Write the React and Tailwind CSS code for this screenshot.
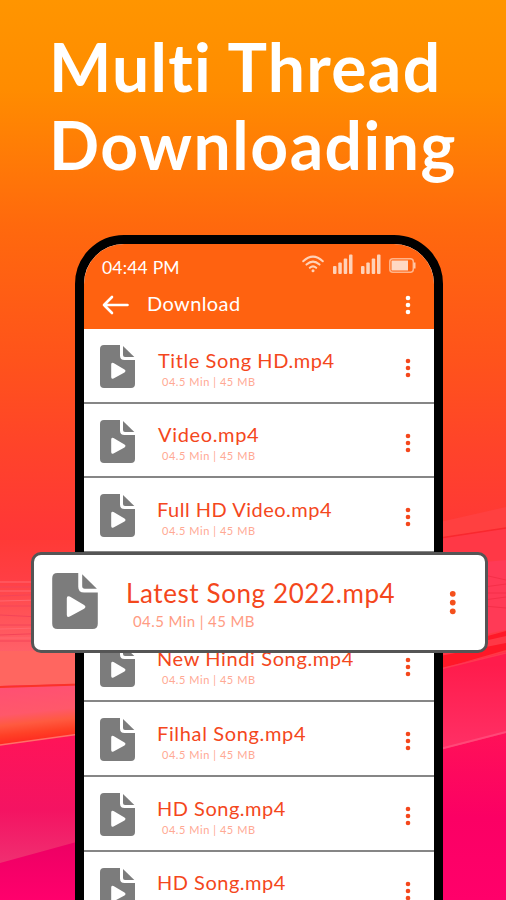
function Backdrop() {
  return (
    <svg className="absolute inset-0" width="506" height="900" viewBox="0 0 506 900" fill="none" preserveAspectRatio="none">
      <defs>
        <linearGradient id="sky" x1="0" y1="0" x2="0" y2="900" gradientUnits="userSpaceOnUse">
          <stop offset="0" stopColor="#ff9500" />
          <stop offset="0.1" stopColor="#ff8c00" />
          <stop offset="0.25" stopColor="#ff690d" />
          <stop offset="0.4" stopColor="#ff531b" />
          <stop offset="0.5" stopColor="#ff432a" />
          <stop offset="0.6" stopColor="#ff3638" />
          <stop offset="0.73" stopColor="#ff1452" />
          <stop offset="0.88" stopColor="#fa0064" />
          <stop offset="1" stopColor="#ff006a" />
        </linearGradient>
        <linearGradient id="haze" x1="0" y1="540" x2="0" y2="651" gradientUnits="userSpaceOnUse">
          <stop offset="0" stopColor="#ff3a36" />
          <stop offset="0.35" stopColor="#ff3e44" />
          <stop offset="0.6" stopColor="#ff5054" />
          <stop offset="1" stopColor="#ff6068" />
        </linearGradient>
        <linearGradient id="wave" x1="0" y1="686" x2="6" y2="744" gradientUnits="userSpaceOnUse">
          <stop offset="0" stopColor="#ff4f74" />
          <stop offset="0.5" stopColor="#ff586a" />
          <stop offset="0.68" stopColor="#ff5a40" />
          <stop offset="0.85" stopColor="#ff4026" />
          <stop offset="1" stopColor="#ff2a20" />
        </linearGradient>
        <linearGradient id="deep" x1="0" y1="735" x2="0" y2="860" gradientUnits="userSpaceOnUse">
          <stop offset="0" stopColor="#ff1458" />
          <stop offset="0.6" stopColor="#f41362" />
          <stop offset="1" stopColor="#f02d70" />
        </linearGradient>
        <linearGradient id="low" x1="0" y1="845" x2="0" y2="900" gradientUnits="userSpaceOnUse">
          <stop offset="0" stopColor="#ee0064" />
          <stop offset="1" stopColor="#ff006c" />
        </linearGradient>
        <linearGradient id="rose" x1="0" y1="665" x2="0" y2="750" gradientUnits="userSpaceOnUse">
          <stop offset="0" stopColor="#ff1c4c" />
          <stop offset="1" stopColor="#ff3066" />
        </linearGradient>
        <linearGradient id="magenta" x1="0" y1="735" x2="0" y2="900" gradientUnits="userSpaceOnUse">
          <stop offset="0" stopColor="#ff1058" />
          <stop offset="0.5" stopColor="#fb0064" />
          <stop offset="1" stopColor="#ff006a" />
        </linearGradient>
      </defs>
      <rect width="506" height="900" fill="url(#sky)" />
      <path d="M0 540H80V652H0Z" fill="url(#haze)" />
      <path d="M0 587H80M0 596L80 593M0 606H80M0 615L80 619M0 625H80M0 635L80 632M0 641H80" stroke="#f44458" strokeWidth="1" />
      <path d="M0 582H80M0 591H80M0 601L80 599M0 629L80 627M0 638H80" stroke="#ff6870" strokeWidth="1" />
      <path d="M0 651H80V684L0 686Z" fill="#ff6660" />
      <path d="M0 686L80 684V734L0 746Z" fill="url(#wave)" />
      <path d="M0 687L80 684.5" stroke="#fb3228" strokeWidth="2" />
      <path d="M0 745L80 734V842L0 864Z" fill="url(#deep)" />
      <path d="M0 745L80 734" stroke="#ff7068" strokeWidth="1.5" />
      <path d="M0 863L80 841V900H0Z" fill="url(#low)" />
      <path d="M440 522L506 507V528L440 538Z" fill="#ff4040" />
      <path d="M440 538L506 528V655L440 666Z" fill="#ff3846" />
      <path d="M440 538L506 528" stroke="#f9282e" strokeWidth="1.500" />
      <path d="M440 566L506 560V630L440 644Z" fill="#ff3a56" />
      <path d="M484 575L506 580M484 587L506 584M484 593H506M484 600L506 597M484 606L506 608" stroke="#f52f48" strokeWidth="1" />
      <path d="M484 637L506 631V636L484 641Z" fill="#ff1828" />
      <path d="M440 656L506 643V650L440 669Z" fill="#ff1828" />
      <path d="M440 669L506 652V734L440 750Z" fill="url(#rose)" />
      <path d="M440 669L506 653" stroke="#ff3850" strokeWidth="1.5" />
      <path d="M440 750L506 733V900H440Z" fill="url(#magenta)" />
      <path d="M440 749L506 732" stroke="#ff4878" strokeWidth="2" />
    </svg>
  );
}

function FileIcon({ className }) {
  return (
    <svg className={className} viewBox="0 0 35 43" fill="none">
      <path
        fillRule="evenodd"
        d="M4 0H20V10.5Q20 15 24.5 15H35V39Q35 43 31 43H4Q0 43 0 39V4Q0 0 4 0ZM11.200 19.500V32Q11.200 34.600 13.500 33.400L24.500 27.400Q26.500 26 24.500 24.600L13.500 18.100Q11.200 17 11.200 19.500Z"
        fill="#7c7c7c"
      />
      <path d="M23 1L34.300 12H25Q23 12 23 10Z" fill="#7c7c7c" />
    </svg>
  );
}

function Dots({ className, fill }) {
  return (
    <svg className={className} viewBox="0 0 6 20" fill={fill}>
      <circle cx="3" cy="3" r="2.300" />
      <circle cx="3" cy="10" r="2.300" />
      <circle cx="3" cy="17" r="2.300" />
    </svg>
  );
}

function Signal() {
  return (
    <svg className="w-5 h-5" viewBox="0 0 20 20" fill="#ffd2b8">
      <rect x="0" y="12" width="3.500" height="8" rx="1" />
      <rect x="5.300" y="8.500" width="3.500" height="11.500" rx="1" />
      <rect x="10.700" y="4.500" width="3.500" height="15.500" rx="1" />
      <rect x="16" y="0.500" width="3.500" height="19.500" rx="1" />
    </svg>
  );
}

function StatusIcons() {
  return (
    <div className="flex items-start">
      <svg className="w-[22px] h-[18px] mt-px" viewBox="0 0 22 18" fill="none" stroke="#ffd2b8" strokeWidth="2" strokeLinecap="round">
        <path d="M1.200 6.200Q11 -3 20.800 6.200M4.500 9.600Q11 3.600 17.500 9.600M7.800 12.800Q11 9.900 14.200 12.800" />
        <circle cx="11" cy="15.700" r="1.500" fill="#ffd2b8" stroke="none" />
      </svg>
      <div className="ml-[9px]"><Signal /></div>
      <div className="ml-2"><Signal /></div>
      <svg className="w-[27px] h-4 ml-2 mt-[4px]" viewBox="0 0 27 16" fill="none">
        <rect x="0.800" y="0.800" width="23.500" height="13.400" rx="3" stroke="#ffb48a" strokeWidth="1.500" />
        <rect x="2.500" y="2.500" width="16.500" height="10" fill="#ffd8c4" />
        <path d="M25.500 4.500V10.500" stroke="#ffc8a8" strokeWidth="2" />
      </svg>
    </div>
  );
}

const songs = [
  { title: "Title Song HD.mp4", spacing: "tracking-[0.580px]", meta: true },
  { title: "Video.mp4", spacing: "tracking-[0.650px]", meta: true },
  { title: "Full HD Video.mp4", spacing: "-ml-px tracking-[0.500px]", meta: true },
  { title: "", spacing: "" },
  { title: "New Hindi Song.mp4", spacing: "-ml-px tracking-[0.620px]", meta: true },
  { title: "Filhal Song.mp4", spacing: "-ml-px tracking-[0.650px]", meta: true },
  { title: "HD Song.mp4", spacing: "-ml-px tracking-[0.500px]", meta: true },
  { title: "HD Song.mp4", spacing: "-ml-px tracking-[0.500px]", meta: false },
];

function Row({ title, spacing, meta }) {
  return (
    <div className="flex h-[74.700px] shrink-0 border-b-2 border-[#868686] pl-4 pr-[23px]">
      {title && (
        <>
          <FileIcon className="mt-4 h-[43px] w-[35px] shrink-0" />
          <div className="ml-[23px] flex-1 whitespace-nowrap">
            <div className={`mt-[18.500px] text-[20px] leading-6 text-[#f4471c] ${spacing}`}>{title}</div>
            {meta && (
              <div className="ml-1 mt-[3px] text-[11px] leading-[14px] tracking-[0.550px] text-[#ffa994]">04.5 Min | 45 MB</div>
            )}
          </div>
          <Dots className="mt-[29px] h-5 w-[6px] shrink-0" fill="#f4471c" />
        </>
      )}
    </div>
  );
}

export default function App() {
  return (
    <div className="relative h-[900px] w-[506px] overflow-hidden font-['Lato','Noto_Sans',sans-serif]">
      <Backdrop />
      <div className="relative flex h-full flex-col">
        <h1 className="h-[235px] shrink-0 whitespace-nowrap pl-[49px] pt-[28px] text-[66px] font-bold leading-[77.500px] text-white">
          <span className="block tracking-[1.300px]">Multi Thread</span>
          <span className="block tracking-[1.500px]">Downloading</span>
        </h1>
        <div className="ml-[75px] flex h-[720px] w-[368px] shrink-0 flex-col overflow-hidden rounded-t-[49px] border-[9px] border-black bg-white">
          <div className="h-[85px] shrink-0 bg-[#ff6210] text-white">
            <div className="flex justify-between pl-[18px] pr-[18px] pt-[10px]">
              <div className="mt-[3px] text-[17.500px] leading-[22px] tracking-[0.200px]">04:44 PM</div>
              <StatusIcons />
            </div>
            <div className="mt-[11px] flex items-center pl-[18px] pr-[23px]">
              <svg className="mt-1 h-5 w-7" viewBox="0 0 28 20" fill="none" stroke="white" strokeWidth="2.600" strokeLinecap="round" strokeLinejoin="round">
                <path d="M2 10H25.500M10 2L2 10L10 18" />
              </svg>
              <div className="ml-[17px] flex-1 text-[20px] leading-6 tracking-[0.400px]">Download</div>
              <Dots className="mt-[5px] h-5 w-[6px]" fill="white" />
            </div>
          </div>
          {songs.map((s, i) => (
            <Row key={i} {...s} />
          ))}
        </div>
      </div>
      <div className="absolute left-[31px] top-[552px] flex h-[101px] w-[457px] whitespace-nowrap rounded-[10px] border-[3px] border-[#555] bg-white pl-[18px] pr-[29px]">
        <FileIcon className="mt-[18px] h-[56px] w-[46px] shrink-0" />
        <div className="ml-[28px] flex-1">
          <div className="mt-[22px] text-[26px] leading-8 tracking-[0.600px] text-[#f4471c]">Latest Song 2022.mp4</div>
          <div className="ml-[7px] mt-[3px] text-[15px] leading-[18px] tracking-[0.400px] text-[#ff9c84]">04.5 Min | 45 MB</div>
        </div>
        <Dots className="mt-[35px] h-[25px] w-[7.500px] shrink-0" fill="#f4501c" />
      </div>
    </div>
  );
}
